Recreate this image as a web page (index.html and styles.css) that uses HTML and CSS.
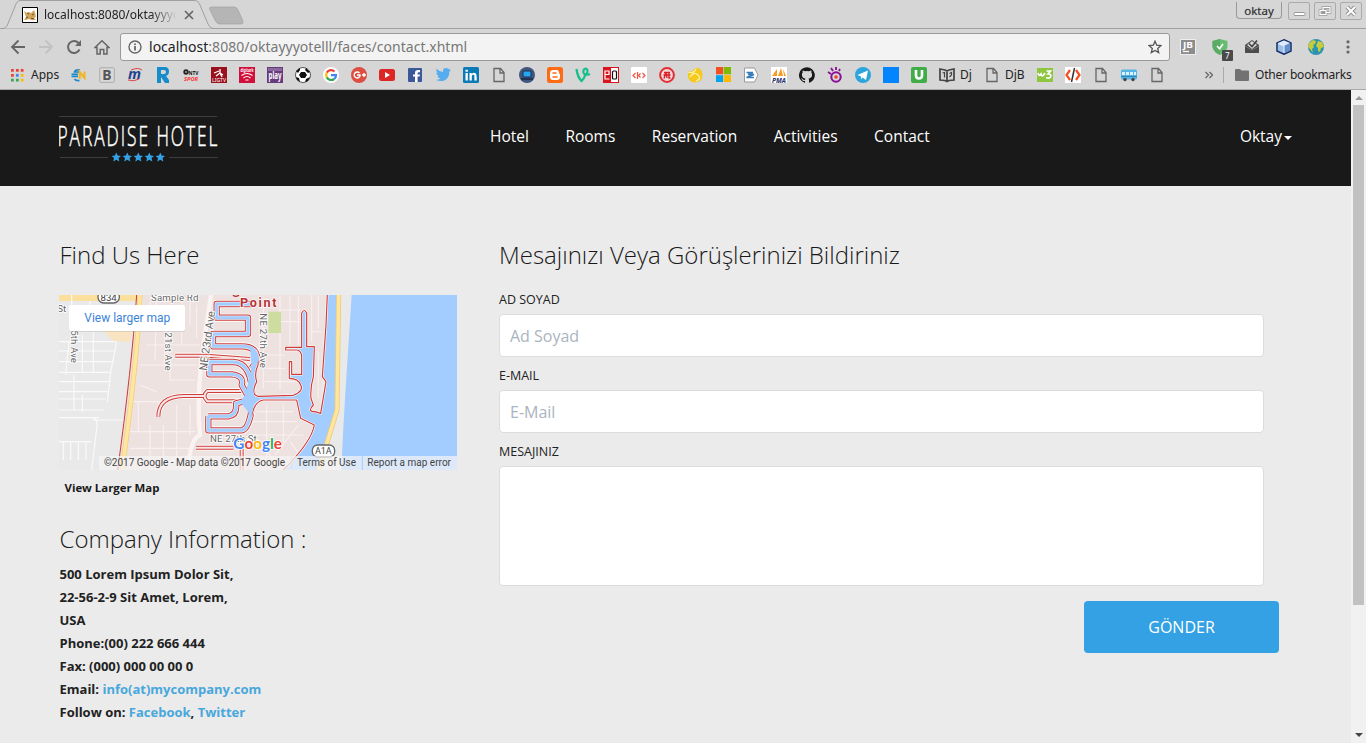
FILE: index.html
```html
<!DOCTYPE html>
<html lang="tr">
<head>
<meta charset="utf-8">
<title>Paradise Hotel</title>
<link rel="stylesheet" href="styles.css">
</head>
<body>
<div class="browser">
  <div class="tabstrip">
    <svg class="tabshape" width="260" height="29" viewBox="0 0 260 29"><path d="M0 28.5H3Q6 28 7 26L16 4Q17.500 .5 20 .5H195Q198 .5 199.500 4L208 24Q210 28.500 213 28.500H260" fill="#d8d8d8" stroke="#a0a0a0"/><path d="M212 7H234Q237 7 238 10L243 21Q243.500 24 241 24H220Q217 24 215.500 21L209.500 9Q209 7 212 7Z" fill="#b5b5b5" stroke="#a2a2a2" stroke-width=".7"/></svg>
    <div class="tab">
      <svg width="16" height="16" viewBox="0 0 16 16"><path d="M.5.5h15v15H.5z" fill="#fff" stroke="#000"/><path d="M2 4l3 2 2-1 2 1 3-3 1 2 1 5-2 1 2 2H9l-2-1-3 1H2l2-3-1-3z" fill="#cfa65c"/><path d="M5 6l2 1M10 8l2-1M4 11l2-1M9 11l3 1" stroke="#5b4a2b" stroke-width=".9"/></svg>
      <span class="tabtitle">localhost:8080/oktayyyotelll</span>
      <svg class="close" width="10" height="10" viewBox="0 0 10 10"><path d="M1 1l8 8M9 1L1 9" stroke="#666" stroke-width="1.700"/></svg>
    </div>
    <div class="winbuttons">
      <span class="user">oktay</span>
      <span class="wb"><svg width="22" height="16" viewBox="0 0 22 16"><rect x="6" y="9.500" width="11" height="3" rx="1" fill="#fff" stroke="#999"/></svg></span>
      <span class="wb"><svg width="22" height="16" viewBox="0 0 22 16" fill="none"><path d="M9 4.500h7v5H9zM6 7.500h6v4H6z" stroke="#999" stroke-width="2.600"/><path d="M9 7V4.500h7v5h-3.500M6 7.500h6v4H6z" stroke="#fff" stroke-width="1.200"/></svg></span>
      <span class="wb"><svg width="22" height="16" viewBox="0 0 22 16"><path d="M7 4l8 8M15 4l-8 8" stroke="#929292" stroke-width="4"/><path d="M7 4l8 8M15 4l-8 8" stroke="#fff" stroke-width="2"/></svg></span>
    </div>
  </div>
  <div class="toolbar">
    <svg class="tool" width="16" height="16" viewBox="0 0 16 16" fill="none" stroke="#666" stroke-width="1.800"><path d="M15 8H2M8.500 1.500L2 8l6.500 6.500"/></svg>
    <svg class="tool" width="16" height="16" viewBox="0 0 16 16" fill="none" stroke="#c1c1c1" stroke-width="1.800"><path d="M1 8h13M7.500 1.500L14 8l-6.500 6.500"/></svg>
    <svg class="tool" width="16" height="16" viewBox="0 0 16 16"><path d="M13.500 10.500A6 6 0 1 1 12.500 4" fill="none" stroke="#666" stroke-width="2"/><path d="M15 1v6H9z" fill="#666"/></svg>
    <svg class="tool" width="16" height="16" viewBox="0 0 16 16"><path d="M1 8.500L8 1.800l7 6.700h-2V15H9.800v-4.500H6.200V15H3V8.500z" fill="none" stroke="#666" stroke-width="1.500"/></svg>
    <div class="omnibox">
      <svg width="14" height="14" viewBox="0 0 14 14"><circle cx="7" cy="7" r="6" fill="none" stroke="#666" stroke-width="1.400"/><path d="M6.200 6h1.600v4.500H6.200zM6.200 3.500h1.600V5H6.200z" fill="#555"/></svg>
      <span class="url"><b>localhost</b>:8080/oktayyyotelll/faces/contact.xhtml</span>
      <svg width="14" height="14" viewBox="0 0 14 14"><path d="M7 1.200l1.700 4 4.300.4-3.300 2.800 1 4.200L7 10.400l-3.700 2.200 1-4.200L1 5.600l4.300-.4z" fill="none" stroke="#555" stroke-width="1.300"/></svg>
    </div>
    <div class="exts">
      <svg width="16" height="16" viewBox="0 0 16 16"><path d="M.5.500h15v15H.5z" fill="#8c8c8c" stroke="#eee"/><path d="M3 12.500h6" stroke="#fff" stroke-width="1.300"/><text x="3" y="9" class="gl" font-size="8" textLength="10" lengthAdjust="spacingAndGlyphs" fill="#fff">JB</text></svg>
      <svg class="shield" width="22" height="22" viewBox="0 0 22 22"><path d="M8 0l7.500 2v6q-1 5-7.500 8Q1.500 13 .5 8V2z" fill="#68bc71"/><path d="M8 0v16Q1.500 13 .5 8V2z" fill="#5baa65"/><path d="M5 7l2.500 2.700L11 5" stroke="#fff" stroke-width="1.600" fill="none"/><rect x="10" y="11" width="11" height="11" rx="1" fill="#4a4a4a"/><text x="13" y="19.500" class="gp" font-size="8" fill="#fff">7</text></svg>
      <svg width="16" height="16" viewBox="0 0 16 16"><path d="M1 6l7-5 7 5v8H1z" fill="#4c4c4c"/><path d="M3 6l5-4 5 4-5 4z" fill="#d6d6d6"/><path d="M5 4.500L8 7.500l5-6" stroke="#444" stroke-width="1.600" fill="none"/><path d="M1 7l7 4 7-4" fill="none" stroke="#888" stroke-width=".7"/></svg>
      <svg width="16" height="16" viewBox="0 0 16 16"><path d="M8 .8l7 3.200v8L8 15.300 1 12V4z" fill="#9ec0e8" stroke="#16306a" stroke-width="1.500"/><path d="M2 4l6-2.500L14 4 8 7z" fill="#dceafa"/><path d="M8 7l6-3v7.500L8 14z" fill="#6590cb"/><path d="M2 4.500L8 7v7" fill="none" stroke="#e8f3ff"/></svg>
      <svg width="16" height="16" viewBox="0 0 16 16"><circle cx="8" cy="8" r="8" fill="#2b94b5"/><path d="M1 4l4-3 3 1-1 3-2 1 1 2-2 2 1 4-3-4-2-2zM10 2l4 1 2 5-3 1-1 4-2-1V9L8 7z" fill="#c6cd38"/></svg>
      <svg width="16" height="16" viewBox="0 0 16 16" fill="#666"><circle cx="8" cy="2.800" r="1.600"/><circle cx="8" cy="8" r="1.600"/><circle cx="8" cy="13" r="1.600"/></svg>
    </div>
  </div>
  <div class="bookmarks">
    <svg class="apps" width="14" height="14" viewBox="0 0 14 14"><path d="M0 0h3v3H0zM5.300 0h3v3h-3zM10.500 0h3v3h-3zM0 5.300h3v3H0z" fill="#ea4335"/><path d="M5.300 5.300h3v3h-3z" fill="#4285f4"/><path d="M0 10.500h3v3H0zM5.300 10.500h3v3h-3z" fill="#34a853"/><path d="M10.500 5.300h3v3h-3zM10.500 10.500h3v3h-3z" fill="#fbbc05"/></svg>
    <span class="bt appst">Apps</span>
    <svg viewBox="0 0 16 16"><path d="M9 3Q4.500 2 3.500 5H8M.5 7.300H7M.5 9.500H7M3.500 12q1.500 2 5 1.500" stroke="#1688c8" stroke-width="1.700" fill="none"/><path d="M8.800 12V5l4.700 6V4.500" fill="none" stroke="#f2b522" stroke-width="2"/></svg>
    <svg viewBox="0 0 16 16"><rect x=".8" y=".8" width="14.500" height="14.500" rx="1" fill="#d9d9d9" stroke="#aaa"/><text x="3.300" y="13" class="gl" font-size="14" fill="#555">B</text></svg>
    <svg viewBox="0 0 16 16"><text x="1" y="12" class="gi" font-size="15" textLength="13" lengthAdjust="spacingAndGlyphs" fill="#213f91">m</text><path d="M4 3q7-3 11 0M1 13q6 2 11-1" stroke="#d44" fill="none"/></svg>
    <svg viewBox="0 0 16 16"><path d="M2 0h8q4 0 4 4.500Q14 8 11 9l3 4v3h-4L6 10v6H2zm4 3v4h3q2 0 2-2T9 3z" fill="#168ccb" fill-rule="evenodd"/></svg>
    <svg viewBox="0 0 16 16"><circle cx="3" cy="5" r="2.700" fill="#222"/><path d="M2 5h2" stroke="#ddd"/><text x="5.500" y="7.500" class="gl" font-size="6" textLength="10" lengthAdjust="spacingAndGlyphs" fill="#111">NTV</text><text x="1" y="14" class="gi" font-size="6" textLength="14" lengthAdjust="spacingAndGlyphs" fill="#f33">SPOR</text></svg>
    <svg viewBox="0 0 16 16"><path d="M0 0h16v16H0z" fill="#9a101d"/><path d="M9 2v4L5 9m4-3l3 2m-3-2l2 4M3 6l5-2" stroke="#fff" stroke-width="1.300" fill="none"/><text x="1" y="15" class="gp" font-size="5.500" textLength="14" lengthAdjust="spacingAndGlyphs" fill="#fff">LIGTV</text></svg>
    <svg viewBox="0 0 16 16"><path d="M0 0h16v16H0z" fill="#d0103a"/><text x="1.500" y="5" class="gl" font-size="4.500" textLength="13" lengthAdjust="spacingAndGlyphs" fill="#fff">digiturk</text><path d="M2.500 8.500q5.500-4 11 0M4.500 11q3.500-3 7 0M6.500 13h3" stroke="#fff" fill="none" stroke-width="1.200"/></svg>
    <svg viewBox="0 0 16 16"><path d="M0 0h16v16H0z" fill="#673a7e"/><path d="M1 1h14v3H1z" fill="#8b67a0"/><text x="1.500" y="11.500" class="gl" font-size="10" textLength="13" lengthAdjust="spacingAndGlyphs" fill="#fff">play</text></svg>
    <svg viewBox="0 0 16 16"><circle cx="8" cy="8" r="7.500" fill="#fff" stroke="#333" stroke-width=".8"/><path d="M6 5h4l2 3-2 3H6L4 8zM1 4l4-3v2L3 6zm10-3l4 4-2 1-3-3zM1 10l3 1 1 4-3-2zm14 0l-2 4-3 1 1-3z" fill="#111"/></svg>
    <svg viewBox="0 0 16 16"><circle cx="8" cy="8" r="8" fill="#fff"/><g fill="none" stroke-width="2.200"><path d="M3.800 5.600A5 5 0 0 1 11.500 4.500" stroke="#ea4335"/><path d="M3.800 5.600a5 5 0 0 0 0 4.800" stroke="#fbbc05"/><path d="M3.800 10.400A5 5 0 0 0 11.200 12" stroke="#34a853"/><path d="M11.200 12A5 5 0 0 0 13 8.200H8" stroke="#4285f4"/></g></svg>
    <svg viewBox="0 0 16 16"><circle cx="8" cy="8" r="8" fill="#dc4e41"/><path d="M8.500 6A3 3 0 1 0 9 9V8H6M11 8h4M13 6v4" stroke="#fff" fill="none" stroke-width="1.400"/></svg>
    <svg viewBox="0 0 16 16"><rect y="2" width="16" height="12" rx="2.500" fill="#dc2725"/><path d="M6 5l5 3-5 3z" fill="#fff"/></svg>
    <svg viewBox="0 0 16 16"><rect x="1" y="1" width="14" height="14" rx="1" fill="#3b5998"/><path d="M8 15V9.500H6v-2h2V5.800Q8 3 11 3h2v2.200h-1.400q-1 0-1 1v1.300H13l-.4 2h-2V15z" fill="#fff"/></svg>
    <svg viewBox="0 0 16 16"><path d="M16 3.200l-1.700 1.600C14.500 11 9 16.500 1 13q3 0 4.500-1.400Q3 11 2.500 9H4Q1.500 8 1.200 5.500l1.500.4Q.5 4 1.700 1.800 4 4.700 8 5q-.5-4 3-4 1.400 0 2.300 1l2-.8-1.300 1.800z" fill="#55acee"/></svg>
    <svg viewBox="0 0 16 16"><rect width="16" height="16" rx="1.500" fill="#0b7bb5"/><path d="M2.500 6h2.300v7.500H2.500zM2.500 2.700h2.300v2H2.500zM6.500 6h2.200v1Q11 4.800 13 6.700q.8 1 .7 6.800h-2.300V9q-.2-1.500-1.400-1.200Q8.800 8 8.800 9.500v4H6.500z" fill="#fff"/></svg>
    <svg class="doc" viewBox="0 0 16 16"><path d="M3 1.500h6.500l3.500 4v9H3zM9 1.500V6h4" /></svg>
    <svg viewBox="0 0 16 16"><circle cx="8" cy="8" r="8" fill="#40567f"/><path d="M4 4h8v6H4z" fill="#23a7f2" stroke="#20304a"/><path d="M2 12h12" stroke="#182a45" stroke-width="1.500"/></svg>
    <svg viewBox="0 0 16 16"><rect width="16" height="16" rx="2.500" fill="#ff6b12"/><path d="M6 3h3.500Q12 3 12 5.500q0 1.500 1 1.500v3q0 3-3 3H6q-3 0-3-3V6q0-3 3-3z" fill="#fff"/><path d="M6 6h3M6 10h4" stroke="#ff6b12" stroke-width="1.600" stroke-linecap="round"/></svg>
    <svg viewBox="0 0 16 16"><path d="M1.500 2q1 8 5 12Q9 12 10.500 7.500 7 6 9 2.500q3-2 3.500 1 0 3-1.500 4 2 .5 4-.5" fill="none" stroke="#17bf8c" stroke-width="2.300"/></svg>
    <svg viewBox="0 0 16 16"><path d="M0 0h16v16H0z" fill="#d9141e"/><path d="M8 1h7v14H8z" fill="#fff"/><path d="M2.500 7.500H6V4H2v8h4.500" stroke="#fff" stroke-width="1.200" fill="none"/><rect x="9.500" y="4" width="4" height="8" rx="1" fill="none" stroke="#111" stroke-width="1.200"/></svg>
    <svg viewBox="0 0 16 16"><rect width="16" height="16" rx="1" fill="#fff"/><path d="M4.500 6L2 8.500 4.500 11M6.500 5v7M9.500 6.500l-2 2 2 2M11.500 6L14 8.500 11.500 11" stroke="#ef5445" fill="none" stroke-width="1.200"/></svg>
    <svg viewBox="0 0 16 16"><circle cx="8" cy="8" r="6.900" fill="#f4d9d8" stroke="#e12f35" stroke-width="2"/><path d="M5 5.500h6M4.500 8h7M5 11.500L7 5l1 6M10 5v6h1.500" stroke="#d91f2a" stroke-width="1.400" fill="none"/></svg>
    <svg viewBox="0 0 16 16"><path d="M1 4q4 2 6-2 6-3 8 3 2 9-5 10-7 2-9-5z" fill="#f5c81d"/><path d="M1 5q6 2 8-3M3 10q4-6 8-2t-2 6" stroke="#fff1a4" stroke-width="1.300" fill="none"/></svg>
    <svg viewBox="0 0 16 16"><path d="M1 0h7v7.300H1z" fill="#f25022"/><path d="M8.600 0H16v7.300H8.600z" fill="#7fba00"/><path d="M1 8.200h7V15H1z" fill="#00a4ef"/><path d="M8.600 8.200H16V15H8.600z" fill="#ffb900"/></svg>
    <svg viewBox="0 0 16 16"><path d="M1.500 1h10l3.500 7-3.500 7h-10z" fill="#fff" stroke="#9a9a9a"/><path d="M3.500 5.500H10L5 7.500h6L3.500 10.500H11" stroke="#397cb9" fill="none" stroke-width="1.400"/></svg>
    <svg viewBox="0 0 16 16"><path d="M0 0h16v16H0z" fill="#fff"/><path d="M1 9l5-7v7zM7 9l3-8 2 8zM12 2l3 7h-2z" fill="#f89b22"/><text x="1" y="15.500" class="gi" font-size="7" textLength="14" lengthAdjust="spacingAndGlyphs" fill="#26316c">PMA</text></svg>
    <svg viewBox="0 0 16 16"><path fill="#191717" d="M8 .2a8 8 0 0 0-2.500 15.600c.4.100.5-.2.500-.4v-1.500c-2.200.5-2.700-1-2.700-1-.4-.9-.9-1.200-.9-1.200-.7-.5.100-.5.100-.5.800.1 1.200.8 1.200.8.700 1.300 1.900.9 2.300.7.100-.5.300-.9.500-1.100-1.800-.2-3.600-.9-3.600-4 0-.9.300-1.600.8-2.100-.1-.2-.4-1 .1-2.100 0 0 .7-.2 2.200.8a7.500 7.500 0 0 1 4 0c1.500-1 2.200-.8 2.200-.8.400 1.100.2 1.900.1 2.100.5.600.8 1.300.8 2.100 0 3.100-1.900 3.800-3.700 4 .3.200.6.700.6 1.500v2.200c0 .2.100.5.600.4A8 8 0 0 0 8 .2z"/></svg>
    <svg viewBox="0 0 16 16"><circle cx="9" cy="10" r="4.700" fill="none" stroke="#890d96" stroke-width="2"/><circle cx="9" cy="10" r="1.800" fill="#ef422a"/><path d="M1 5l3 2M4 1l2 3M9 0v3M13 2l-1 2" stroke="#890d96" stroke-width="1.800"/></svg>
    <svg viewBox="0 0 16 16"><circle cx="8" cy="8" r="8" fill="#2ca5dc"/><path d="M2.500 8L13 3.500 11 13 7.500 10.500 6 12.500V9.500z" fill="#fff"/></svg>
    <svg viewBox="0 0 16 16"><path d="M0 0h16v16H0z" fill="#0385ff"/></svg>
    <svg viewBox="0 0 16 16"><rect width="16" height="16" rx="2" fill="#41ad49"/><path d="M5 3v5.500q0 3 3 3t3-3V3" fill="none" stroke="#fff" stroke-width="2.600"/></svg>
    <svg viewBox="0 0 16 16"><path d="M1 2l5 1 2 1 2-1 5-1v11l-5 .5-2 1-2-1L1 13zM8 4v10" fill="none" stroke="#444" stroke-width="1.700"/><path d="M3.500 6l2-.5v5M10.500 6.500l2-1V8l-2 2" fill="none" stroke="#444" stroke-width="1.200"/></svg>
    <span class="bt dj">Dj</span>
    <svg class="doc" viewBox="0 0 16 16"><path d="M3 1.500h6.500l3.500 4v9H3zM9 1.500V6h4" /></svg>
    <span class="bt djb">DjB</span>
    <svg viewBox="0 0 16 16"><path d="M0 1h16v14H0z" fill="#8dc63f"/><path d="M1 6q1 4 3 1 1 4 4-1M9.500 4h4L11 7q4 0 2.500 3-1.500 2-4.500.5" fill="none" stroke="#fff" stroke-width="1.700"/></svg>
    <svg viewBox="0 0 16 16"><path d="M0 0h16v16H0z" fill="#fff"/><path d="M5 3L1.500 8 5 13M11 3l3.500 5-3.500 5" stroke="#f4511e" stroke-width="2.200" fill="none"/><path d="M9.500 1L6.500 15" stroke="#333" stroke-width="1.500"/></svg>
    <svg class="doc" viewBox="0 0 16 16"><path d="M3 1.500h6.500l3.500 4v9H3zM9 1.500V6h4" /></svg>
    <svg viewBox="0 0 16 16"><rect y="2.500" width="16" height="10" rx="1.500" fill="#57b5e5"/><path d="M1 5h3v3H1zM5 5h3v3H5zM9 5h3v3H9zM13 5h2v3h-2z" fill="#d9f2ff"/><path d="M0 9.500h16" stroke="#2685bc"/><circle cx="4" cy="12.500" r="1.700" fill="#444"/><circle cx="12" cy="12.500" r="1.700" fill="#444"/></svg>
    <svg class="doc" viewBox="0 0 16 16"><path d="M3 1.500h6.500l3.500 4v9H3zM9 1.500V6h4" /></svg>
    <div class="others"><svg class="chev" viewBox="0 0 8 8"><path d="M.5 1L3.500 4l-3 3M4.500 1l3 3-3 3" fill="none" stroke="#666" stroke-width="1.300"/></svg><i></i><svg class="folder" viewBox="0 0 14 12"><path d="M0 1q0-1 1-1h4l1.500 1.500H13q1 0 1 1V11q0 1-1 1H1q-1 0-1-1z" fill="#727272"/></svg><span class="bt ob">Other bookmarks</span></div>
  </div>
</div>
<div class="viewport">
<div class="page">
  <header class="header">
    <svg class="logo" width="160" height="48" viewBox="0 0 160 48"><path d="M0 1.500h158M1 42.500h48M110 42.500h49" stroke="#3d3d3d"/><text transform="translate(-1.500 31) scale(.62 1)" font-size="28" textLength="258" class="logotext">PARADISE HOTEL</text>
    <g fill="#35a1e4"><path id="st" d="M57.300 37.500l1.400 3 3.300.4-2.400 2.200.7 3.300-3-1.700-3 1.700.7-3.300-2.400-2.200 3.300-.4z"/><use href="#st" x="11"/><use href="#st" x="22"/><use href="#st" x="33"/><use href="#st" x="44"/></g></svg>
    <nav class="nav"><a>Hotel</a><a>Rooms</a><a>Reservation</a><a>Activities</a><a>Contact</a></nav>
    <a class="account">Oktay<span class="caret"></span></a>
  </header>
  <main class="content">
    <section class="left">
      <h2>Find Us Here</h2>
      <svg class="map" width="398" height="175" viewBox="27 30 1194 525">
        <defs>
          <path id="canals" d="M603 57H500V98H594V147H489V184H575Q622 184 622 225L605 250M607 335Q605 232 550 231H478V268H545Q583 272 575 300L600 345M475 394V436H575Q592 434 602 390L607 345M475 394H535Q562 390 558 355L600 345"/>
          <path id="inlets" d="M376 212H470L600 222M462 333H400Q325 335 325 395M438 488H550M575 490V555M472 318Q455 333 472 349H580Q603 333 580 318Z"/>
          <path id="shore" d="M600 190Q628 195 624 240 612 265 620 290 600 330 625 334L730 331Q762 318 752 300 745 280 718 280V230H725V268H755V210Q750 195 740 195H707V187H755V85Q763 68 770 85V185H793L790 275Q780 310 783 340L790 360Q770 380 795 380L812 385 828 290 817 275 828 120 832 28"/>
          <path id="shore2" d="M605 395Q612 350 640 345H740L752 400 793 420Q785 470 700 555"/>
        </defs>
        <path d="M27 30h1194v525H27z" fill="#e9e9e9"/>
        <path d="M262 30H835L800 520l-50 35H202z" fill="#eee2e0"/>
        <path d="M27 30h235v18H27z" fill="#fbdf9c"/><path d="M160 138h85l-4 32-50-2z" fill="#fae3c0"/>
        <g fill="none" stroke="#fbfafa" stroke-width="3.500"><path d="M27 170h170M27 198h170M27 230h165M27 262h155M27 290h150M27 320h145M27 342h140M27 375h135M27 398h120M130 405h90M27 470h95M57 170l-10 100M97 150v110M130 140v122M200 170l-18 92-10 90M72 270v105M97 330v50M130 400q15 5 10 30l-15 125M40 470v55M62 470v55M85 470v55M108 470v55M65 30v30M120 48v12"/></g>
        <g fill="none" stroke="#f8f0ef" stroke-width="3.500"><path d="M300 50v60M320 45l-5 180M345 100l10 140M395 50v130M420 50v70M440 60v100M290 180h160M270 240h170M250 350h80M360 250v35h75M225 440h210M265 350v90M240 490h190M300 420v130M340 420v130M380 360v190M420 360v90M215 530h220M270 300l50 20M640 60v250M690 35v280M720 35v145M745 35v145M690 75h60M690 110h65M645 210h60M645 250h60M645 290h90M620 380h110M610 410h130M600 450h160M650 360v160M700 360v110M745 420l-70 90M720 470l30 40M620 460l70 90M785 30v140M805 30v100M785 140h30M805 200v140"/></g>
        <path d="M483 30q-12 80-28 190-15 120-5 230-30 12-35 100" stroke="#faf3f2" stroke-width="13" fill="none"/>
        <path d="M260 30Q245 250 203 555" stroke="#c93b38" stroke-width="3" fill="none"/><path d="M270 30Q262 230 216 555" stroke="#edcb82" stroke-width="15" fill="none"/><path d="M270 30Q262 230 216 555" stroke="#ffe69e" stroke-width="11" fill="none"/>
        <path d="M655 80h38v64h-38z" fill="#cddc9f"/>
        <g fill="none" stroke-linejoin="round">
          <use href="#inlets" stroke="#fff" stroke-width="17"/><use href="#inlets" stroke="#d13b38" stroke-width="12"/><use href="#inlets" stroke="#f5e7e8" stroke-width="6"/>
          <use href="#canals" stroke="#fff" stroke-width="24"/><use href="#canals" stroke="#d13b38" stroke-width="19"/><use href="#canals" stroke="#e7eefa" stroke-width="13"/>
        </g>
        <path d="M600 190Q628 195 624 240 612 265 620 290 600 330 625 334L730 331Q762 318 752 300 745 280 718 280V230H725V268H755V210Q750 195 740 195H707V187H755V85Q763 68 770 85V185H793L790 275Q780 310 783 340L790 360Q770 380 795 380L812 385 828 290 817 275 828 120 832 30H868L861 375 806 555H700Q785 470 793 420L752 400 740 345H640Q612 350 605 395L590 375 570 350 585 330 595 290 605 245Z" fill="#a3ccff"/>
        <g fill="none" stroke-linejoin="round"><use href="#shore" stroke="#fff" stroke-width="7"/><use href="#shore2" stroke="#fff" stroke-width="7"/><use href="#shore" stroke="#d13b38" stroke-width="3.500"/><use href="#shore2" stroke="#d13b38" stroke-width="3.500"/><use href="#canals" stroke="#a3ccff" stroke-width="9"/></g>
        <path d="M875 30h30l-12 260-22 265h-60l45-165z" fill="#e9e9e9"/>
        <path d="M866 30l-5 345-55 180" stroke="#eecb7b" stroke-width="15" fill="none"/><path d="M866 30l-5 345-55 180" stroke="#ffe69e" stroke-width="10" fill="none"/>
        <path d="M905 30h316v525H874q5-120 14-260z" fill="#a3ccff"/>
        <g class="maptext" fill="#666" stroke="#fff" stroke-width="5" paint-order="stroke" font-size="29"><text x="303" y="47" textLength="142">Sample Rd</text><text x="22" y="82">St</text><text transform="translate(62 136) rotate(90)" textLength="98">5th Ave</text><text transform="translate(346 142) rotate(90)" textLength="115">21st Ave</text><text transform="translate(470 258) rotate(-82)" font-size="33" textLength="180" lengthAdjust="spacingAndGlyphs">NE 23rd Ave</text><text transform="translate(631 85) rotate(90)" textLength="164">NE 27th Ave</text><text x="480" y="472" textLength="140">NE 27th St</text></g>
        <g class="maptext" font-weight="700" fill="#b83239" stroke="#fff" stroke-width="4" paint-order="stroke"><text x="570" y="65" font-size="38" textLength="110">Point</text></g><path d="M549 30q8 8 18 0" fill="none" stroke="#b83239" stroke-width="4"/>
        <g class="maptext" font-size="29" text-anchor="middle" fill="#444"><rect x="144" y="18" width="64" height="36" rx="17" fill="#fff" stroke="#666" stroke-width="4"/><text x="176" y="49">834</text><rect x="787" y="480" width="67" height="36" rx="16" fill="#fff" stroke="#666" stroke-width="4"/><text x="820" y="508" font-size="27">A1A</text></g>
        <rect x="57" y="62" width="348" height="79" rx="6" fill="#aaa" opacity=".35"/><rect x="57" y="60" width="348" height="78" rx="6" fill="#fff"/><text x="103" y="110" class="maptext" font-size="36" textLength="258" lengthAdjust="spacingAndGlyphs" fill="#3b82d8">View larger map</text>
        <g class="google" font-size="48" font-weight="700" stroke="#fff" stroke-width="5" paint-order="stroke"><text x="550" y="492" textLength="146" lengthAdjust="spacingAndGlyphs"><tspan fill="#4285f4">G</tspan><tspan fill="#ea4335">o</tspan><tspan fill="#fbbc05">o</tspan><tspan fill="#4285f4">g</tspan><tspan fill="#34a853">l</tspan><tspan fill="#ea4335">e</tspan></text></g>
        <path d="M147 513h1074v42H147z" fill="#f5f5f5" opacity=".7"/><path d="M937 513v42" stroke="#a3ccff" stroke-width="3"/><path d="M724 515v38" stroke="#ddd" stroke-width="2"/>
        <g class="maptext" font-size="30" fill="#444"><text x="162" y="543" textLength="543" lengthAdjust="spacingAndGlyphs">©2017 Google - Map data ©2017 Google</text><text x="741" y="543" textLength="177" lengthAdjust="spacingAndGlyphs">Terms of Use</text><text x="952" y="543" textLength="251" lengthAdjust="spacingAndGlyphs">Report a map error</text></g>
      </svg>
      <a class="larger">View Larger Map</a>
      <h2>Company Information :</h2>
      <address class="info">500 Lorem Ipsum Dolor Sit,<br>22-56-2-9 Sit Amet, Lorem,<br>USA<br>Phone:(00) 222 666 444<br>Fax: (000) 000 00 00 0<br>Email: <a>info(at)mycompany.com</a><br>Follow on: <a>Facebook</a>, <a>Twitter</a></address>
    </section>
    <form class="form">
      <h2>Mesajınızı Veya Görüşlerinizi Bildiriniz</h2>
      <label>AD SOYAD</label><input type="text" placeholder="Ad Soyad">
      <label>E-MAIL</label><input type="text" placeholder="E-Mail">
      <label>MESAJINIZ</label><textarea></textarea>
      <button type="button">GÖNDER</button>
    </form>
  </main>
</div>
<div class="scrollbar"><span class="up"></span><span class="thumb"></span><span class="down"></span></div>
</div>
</body>
</html>
```
FILE: styles.css
```css
* { box-sizing: border-box; }
body { margin: 0; width: 1366px; height: 743px; overflow: hidden; font-family: "Open Sans", sans-serif; background: #ebebeb; }
svg { display: block; flex: none; }

/* Browser frame */
.browser { height: 90px; background: #d6d6d6; border-bottom: 1px solid #aaa; font-family: "Noto Sans", sans-serif; }
.tabstrip { height: 29px; display: flex; border-bottom: 1px solid #a0a0a0; position: relative; }
.tabshape { position: absolute; left: 0; top: 0; }
.tab { position: relative; display: flex; align-items: center; padding-left: 22px; height: 29px; width: 260px; }
.tabtitle { margin-left: 6px; width: 133px; overflow: hidden; white-space: nowrap; font-size: 12px; color: #222; -webkit-mask-image: linear-gradient(90deg, #000 80%, transparent); mask-image: linear-gradient(90deg, #000 80%, transparent); }
.close { margin-left: 7px; }
.winbuttons { margin-left: auto; display: flex; gap: 4px; padding: 2px 4px 0 0; }
.user { width: 46px; height: 17px; margin-right: 2px; border: 1px solid #999; border-top: 0; border-radius: 0 0 4px 4px; font-size: 11.5px; line-height: 17px; text-align: center; color: #333; text-shadow: 0 0 1px #777, 0 0 2px #fff; }
.wb { width: 22px; height: 18px; border: 1px solid #aaa; border-radius: 2px; display: flex; align-items: center; justify-content: center; }
.toolbar { height: 35px; display: flex; align-items: center; padding-left: 10px; }
.tool { margin-right: 12px; }
.omnibox { width: 1050px; height: 28px; margin-left: -2px; padding: 0 7px; display: flex; align-items: center; border: 1px solid #999; border-radius: 3px; background: #f3f3f3; }
.url { flex: 1; margin-left: 7px; font-size: 14px; letter-spacing: .02px; color: #777; }
.url b { color: #222; font-weight: 400; }
.exts { display: flex; gap: 16px; margin-left: 10px; }
.shield { margin-right: -6px; margin-bottom: -6px; }
.gl { font-family: "Noto Sans", sans-serif; font-weight: 700; }
.gi { font-family: "Noto Sans", sans-serif; font-weight: 700; font-style: italic; }
.gp { font-family: "Noto Sans", sans-serif; }
.bookmarks { display: flex; align-items: center; gap: 12px; height: 22px; padding-left: 11px; }
.bookmarks > svg { width: 16px; height: 16px; }
.bookmarks > .apps { width: 13px; height: 13px; }
.doc path { fill: none; stroke: #666; stroke-width: 1.3; }
.bt { font-size: 12px; line-height: 16px; color: #222; white-space: nowrap; }
.appst { width: 28px; margin-left: -5px; }
.dj { width: 12px; margin-left: -7px; }
.djb { width: 20px; margin-left: -7px; }
.ob { letter-spacing: -.18px; }
.others { display: flex; align-items: center; margin-left: 28px; }
.chev { width: 8px; height: 8px; }
.others i { width: 1px; height: 16px; background: #aaa; margin: 0 11px 0 10px; }
.folder { width: 14px; height: 12px; margin-right: 6px; }

/* Page */
.viewport { display: flex; height: 653px; }
.page { flex: 1; background: #ebebeb; }
.header { height: 96px; background: #191919; display: flex; color: #fff; font-size: 15.5px; line-height: 24px; }
.logo { margin: 25px 0 0 59px; }
.logotext { font-family: "Open Sans", sans-serif; font-weight: 300; fill: #fff; stroke: #fff; stroke-width: .5; }
.nav { display: flex; gap: 36.5px; margin: 34px 0 0 271px; }
.account { margin: 34px 59px 0 auto; display: flex; align-items: center; height: 24px; }
.caret { margin: 4px 0 0 2px; border: 4px solid transparent; border-top-color: #fff; border-bottom: 0; }
.content { display: flex; gap: 42px; padding: 53px 0 0 59px; }
.left { width: 398px; }
.left h2, .info { padding-left: .5px; }
h2 { margin: 0; font-size: 24px; line-height: 32px; font-weight: 300; color: #191919; white-space: nowrap; }
.map { margin-top: 24px; }
.maptext { font-family: Roboto, sans-serif; }
.google { font-family: Lato, sans-serif; }
.larger { display: block; margin: 9px 0 26px 5.5px; font-size: 11.4px; line-height: 18px; font-weight: 700; color: #191919; }
.info { margin-top: 8px; font-style: normal; font-size: 13px; line-height: 23px; font-weight: 700; color: #222; }
.info a { color: #48a7dc; }
.form { width: 780px; display: flex; flex-direction: column; }
.form h2 { margin-bottom: 20px; }
label { font-size: 12.5px; line-height: 18px; margin-bottom: 5px; color: #222; }
input, textarea { width: 765px; height: 43px; margin: 0 0 10px; padding: 0 10px; border: 1px solid #dcdcdc; border-radius: 4px; background: #fff; font: 16px "Open Sans", sans-serif; outline: 0; resize: none; }
textarea { height: 120px; margin-bottom: 15px; }
input::placeholder { color: #aab4be; }
button { align-self: flex-end; width: 195px; height: 52px; border: 0; border-radius: 4px; background: #33a1e3; color: #fff; font: 16px "Open Sans", sans-serif; }
.scrollbar { width: 15px; background: #f1f1f1; display: flex; flex-direction: column; align-items: center; }
.up { margin: 6px 0 5px; border: 4px solid transparent; border-bottom-color: #999; border-top: 0; }
.thumb { width: 11px; height: 500px; background: #c1c1c1; }
.down { margin-top: auto; margin-bottom: 6px; border: 4px solid transparent; border-top-color: #444; border-bottom: 0; }
```
